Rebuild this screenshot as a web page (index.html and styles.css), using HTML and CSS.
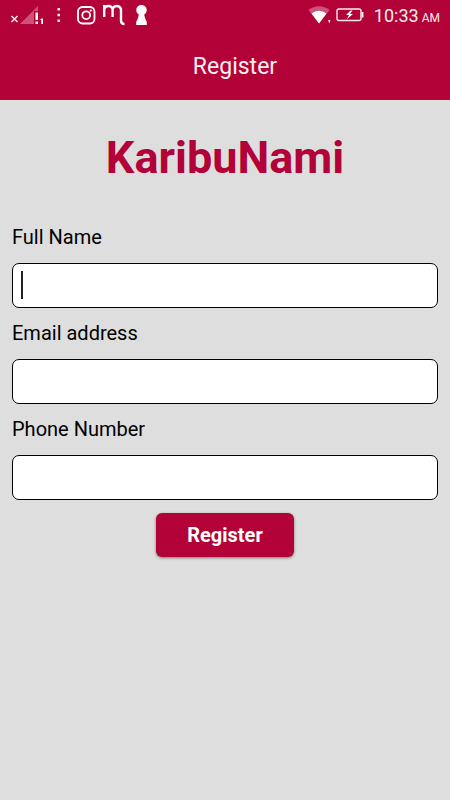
FILE: index.html
```html
<!DOCTYPE html>
<html lang="en">
<head>
    <meta charset="UTF-8">
    <meta name="viewport" content="width=device-width, initial-scale=1.0">
    <title>Register - KaribuNami</title>
    <link rel="stylesheet" href="styles.css">
</head>
<body>

    <header class="app-header">
        <!-- Phone status bar -->
        <div class="status-bar">
            <svg class="status-left" width="150" height="32" viewBox="0 0 150 32" aria-hidden="true">
                <!-- Signal -->
                <path d="M11.500 16l6 6M17.500 16l-6 6" fill="none" stroke="#fbeeee" stroke-width="1.500"/>
                <path d="M20 24L38 6v5h-4v13z" fill="#cd527c"/>
                <path d="M35.500 12.500h2.500v7.500h-2.500zM35.500 21.500h2.500v2.500h-2.500z" fill="#fff"/>
                <path d="M40 19.500l1.500-1h1.500v5.500h-1.700v-4z" fill="#fff"/>
                <!-- More -->
                <path d="M57.500 8h2.500v2.500h-2.500zM57.500 13.700h2.500v2.500h-2.500zM57.500 19.500h2.500v2.500h-2.500z" fill="#fbeeee"/>
                <!-- Camera -->
                <rect x="78" y="7" width="16.500" height="16.500" rx="4.500" fill="none" stroke="#fff" stroke-width="1.800"/>
                <circle cx="86.200" cy="15.200" r="3.900" fill="none" stroke="#fff" stroke-width="1.800"/>
                <circle cx="90.800" cy="10.600" r="1.100" fill="#fff"/>
                <!-- Curled m logo -->
                <path d="M104.200 17V5M104.200 9q1-3 4.200-3t4.200 3.200V17M112.600 9.200q1-3.200 4.200-3.200t4.200 3.200V20.500q0 3.500 3.500 3.500" fill="none" stroke="#fff" stroke-width="2.400"/>
                <!-- Keyhole -->
                <path d="M141.500 5c3 0 5.200 2.200 5.200 5 0 2-1 3.500-2.500 4.500l.8 3.500 1.800 4v3h-10.600v-3l1.800-4 .8-3.500c-1.500-1-2.500-2.500-2.500-4.500 0-2.800 2.200-5 5.200-5z" fill="#fff"/>
            </svg>
            <div class="status-right">
                <svg width="56" height="32" viewBox="0 0 56 32" aria-hidden="true">
                    <!-- Wifi -->
                    <path d="M0.500 10Q11 2.500 21.500 10L11 23.500z" fill="#cd527c"/>
                    <path d="M3.500 13.500Q11 8 18.500 13.500L11 23.500z" fill="#fff"/>
                    <path d="M20 20h2.500l-1.200 3.500z" fill="#fbeeee"/>
                    <!-- Battery -->
                    <rect x="29" y="9" width="24" height="11.500" rx="2" fill="none" stroke="#fbeeee" stroke-width="1.400"/>
                    <path d="M53.500 12h2v5.500h-2z" fill="#fbeeee"/>
                    <path d="M42.500 10.500l-4.500 4.500h3l-2 4 6-5h-3l2.500-3.500z" fill="#fff"/>
                </svg>
                <span class="time">10:33<small class="meridiem">AM</small></span>
            </div>
        </div>
        <div class="title-bar">Register</div>
    </header>

    <main class="content">
        <h1 class="brand">KaribuNami</h1>

        <form class="register-form">
            <div class="field">
                <label for="full-name">Full Name</label>
                <div class="input-wrap">
                    <input type="text" id="full-name">
                    <span class="caret"></span>
                </div>
            </div>
            <div class="field">
                <label for="email">Email address</label>
                <input type="email" id="email">
            </div>
            <div class="field">
                <label for="phone">Phone Number</label>
                <input type="tel" id="phone">
            </div>
            <button type="button" class="submit">Register</button>
        </form>
    </main>

</body>
</html>
```
FILE: styles.css
```css
* {
    box-sizing: border-box;
}

body {
    margin: 0;
    min-height: 100vh;
    background-color: #dedede;
    color: #000;
    font-family: Roboto, "Liberation Sans", sans-serif;
}

/* Header */
.app-header {
    background-color: #b30238;
    color: #fbeeee;
}

.status-bar {
    display: flex;
    justify-content: space-between;
    height: 32px;
}

.status-right {
    display: flex;
    gap: 10px;
    padding-right: 10px;
}

.time {
    font-size: 18px;
    line-height: 32px;
}

.meridiem {
    margin-left: 3px;
    font-size: 12px;
}

.title-bar {
    padding: 19px 0 17px 20px;
    font-size: 23px;
    line-height: 32px;
    text-align: center;
}

/* Form */
.content {
    padding: 30px 12px;
}

.brand {
    margin: 0 0 39px;
    color: #b30238;
    font-size: 45px;
    line-height: 56px;
    text-align: center;
}

.register-form {
    display: flex;
    flex-direction: column;
    gap: 13px;
}

.field label {
    display: block;
    margin-bottom: 14px;
    font-size: 20px;
    line-height: 24px;
}

.field input {
    display: block;
    width: 100%;
    height: 45px;
    padding: 0 8px;
    border: 1px solid #000;
    border-radius: 7px;
    background-color: #fff;
    font: inherit;
    font-size: 20px;
}

.input-wrap {
    position: relative;
}

/* Text cursor inside the active field */
.caret {
    position: absolute;
    top: 8px;
    left: 9px;
    width: 2px;
    height: 28px;
    background-color: #222;
}

.submit {
    align-self: center;
    height: 44px;
    padding: 0 31px;
    border: 0;
    border-radius: 6px;
    background-color: #b30238;
    box-shadow: 0 1px 3px rgba(0, 0, 0, 0.45);
    color: #fff;
    font-family: inherit;
    font-size: 20px;
    font-weight: bold;
}
```
